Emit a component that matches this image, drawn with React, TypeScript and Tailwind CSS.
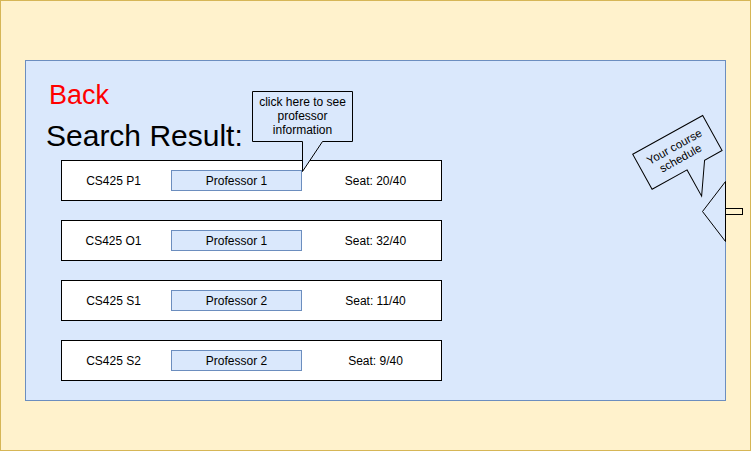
import React from "react";

const rows = [
  { code: "CS425 P1", prof: "Professor 1", seat: "Seat: 20/40" },
  { code: "CS425 O1", prof: "Professor 1", seat: "Seat: 32/40" },
  { code: "CS425 S1", prof: "Professor 2", seat: "Seat: 11/40" },
  { code: "CS425 S2", prof: "Professor 2", seat: "Seat: 9/40" },
];

export default function App() {
  return (
    <div
      className="relative w-[751px] h-[451px] box-border border border-[#d6b656] bg-[#fff2cc] pt-[59px] pl-[24px] overflow-hidden"
      style={{ fontFamily: '"Liberation Sans", Arial, sans-serif' }}
    >
      <div className="w-[701px] h-[341px] box-border border border-[#6c8ebf] bg-[#dae8fc] flex flex-col">
        <div className="ml-[23px] mt-[21px] text-[27px] leading-none text-[#ff0000]">Back</div>
        <div className="ml-[20px] mt-[12px] text-[30px] leading-none text-black">Search Result:</div>
        <div className="ml-[35px] mt-[9px] flex flex-col gap-[19px]">
          {rows.map((r) => (
            <div
              key={r.code}
              className="w-[381px] h-[41px] box-border border border-black bg-white flex items-center text-[12px] text-black"
            >
              <div className="w-[103px] text-center">{r.code}</div>
              <div className="ml-[6px] w-[131px] h-[21px] box-border border border-[#6c8ebf] bg-[#dae8fc] flex items-center justify-center">
                {r.prof}
              </div>
              <div className="flex-1 pl-[8px] text-center">{r.seat}</div>
            </div>
          ))}
        </div>
      </div>

      <svg
        className="absolute left-0 top-0 pointer-events-none"
        width="751"
        height="451"
        viewBox="0 0 751 451"
        style={{ fontFamily: '"Liberation Sans", Arial, sans-serif' }}
      >
        {/* professor callout */}
        <path
          d="M251.5 90.5 H351.5 V140.5 H321.5 L301.5 170.5 V140.5 H251.5 Z"
          fill="#dae8fc"
          stroke="#000"
          strokeWidth="1"
        />
        <text x="301.5" y="105" fontSize="12" textAnchor="middle" fill="#000">click here to see</text>
        <text x="301.5" y="119" fontSize="12" textAnchor="middle" fill="#000">professor</text>
        <text x="301.5" y="133" fontSize="12" textAnchor="middle" fill="#000">information</text>

        {/* course schedule callout */}
        <g transform="translate(631.7 153.3) rotate(-29)">
          <path d="M0 0 H80 V40 H60 L40 70 V40 H0 Z" fill="#dae8fc" stroke="#000" strokeWidth="1" />
          <text x="40" y="17.5" fontSize="11.5" textAnchor="middle" fill="#000">Your course</text>
          <text x="40" y="30.5" fontSize="11.5" textAnchor="middle" fill="#000">schedule</text>
        </g>

        {/* arrow at right edge */}
        <rect x="724.5" y="207.5" width="17" height="6" fill="#fff2cc" stroke="#000" strokeWidth="1" />
        <path d="M724.5 180.5 L701.5 210.5 L724.5 240.5 Z" fill="#dae8fc" stroke="#000" strokeWidth="1" />
      </svg>
    </div>
  );
}
